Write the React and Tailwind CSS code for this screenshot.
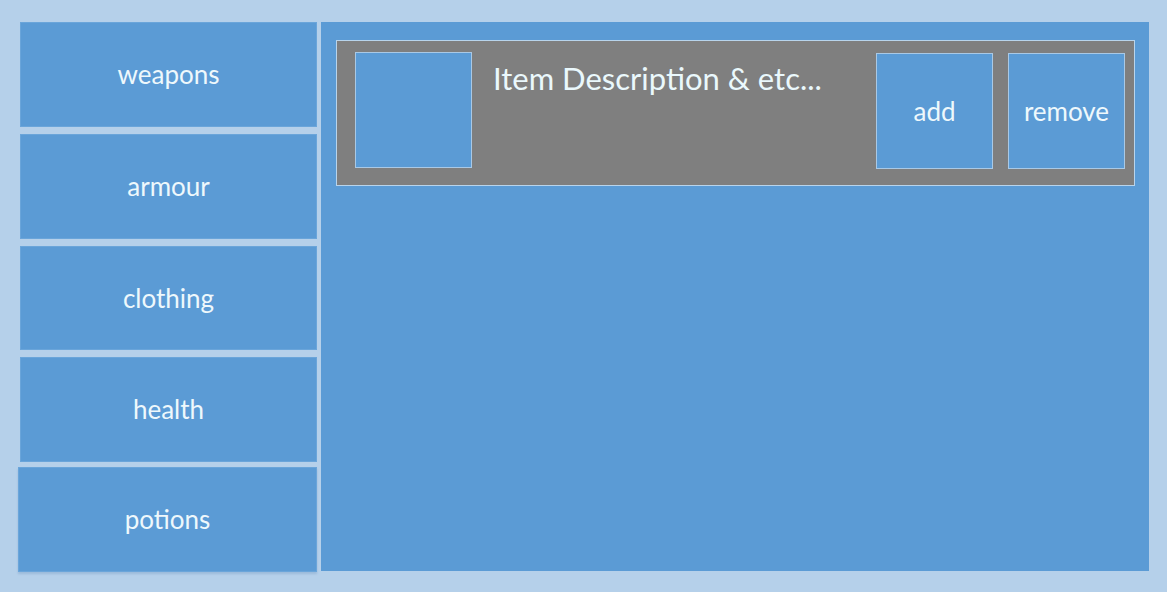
import React from "react";

export default function App() {
  return (
    <div className="w-[1167px] h-[592px] bg-[#b5d0ea] overflow-hidden" style={{ fontFamily: "Lato, 'Open Sans', sans-serif" }}>
      <div className="flex pt-[22px] pl-[20px] gap-[4px]">
        <div className="flex flex-col w-[297px]">
          <div className="h-[105px] bg-[#5b9bd5] border border-[#6aa5da] flex items-center justify-center text-[26px] text-[#eef8fc]">weapons</div>
          <div className="h-[105px] mt-[7px] bg-[#5b9bd5] border border-[#6aa5da] flex items-center justify-center text-[26px] text-[#eef8fc]">armour</div>
          <div className="h-[104px] mt-[7px] bg-[#5b9bd5] border border-[#6aa5da] flex items-center justify-center text-[26px] text-[#eef8fc]">clothing</div>
          <div className="h-[105px] mt-[7px] bg-[#5b9bd5] border border-[#6aa5da] flex items-center justify-center text-[26px] text-[#eef8fc]">health</div>
          <div className="h-[105px] mt-[5px] -ml-[2px] bg-[#5b9bd5] border border-[#6aa5da] flex items-center justify-center text-[26px] text-[#eef8fc] shadow-[0_2px_2px_rgba(80,120,170,0.25)]">potions</div>
        </div>
        <div className="w-[828px] h-[549px] bg-[#5b9bd5] pt-[18px] pl-[15px]">
          <div className="w-[799px] h-[146px] bg-[#7f7f7f] border border-[#b8d4ec] flex pl-[18px] pt-[11px] pr-[9px]">
            <div className="w-[117px] h-[116px] bg-[#5b9bd5] border border-[#a9c9e6] shrink-0"></div>
            <div className="ml-[21px] flex-1 text-[31px] leading-none text-[#eaf8fc] pt-[11px] whitespace-nowrap">Item Description &amp; etc...</div>
            <div className="w-[117px] h-[116px] mt-[1px] bg-[#5b9bd5] border border-[#a9c9e6] flex items-center justify-center text-[26px] text-[#eef8fc] shrink-0">add</div>
            <div className="w-[117px] h-[116px] mt-[1px] ml-[15px] bg-[#5b9bd5] border border-[#a9c9e6] flex items-center justify-center text-[26px] text-[#eef8fc] shrink-0">remove</div>
          </div>
        </div>
      </div>
    </div>
  );
}
